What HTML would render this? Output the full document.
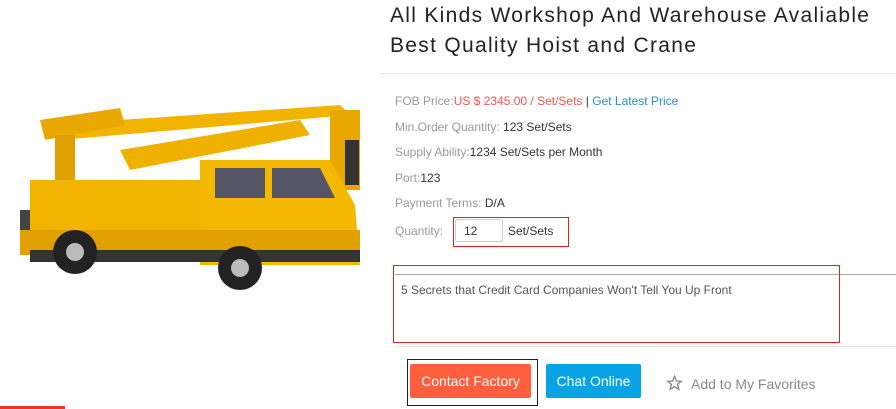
<!DOCTYPE html>
<html><head><style>
body{margin:0;width:896px;height:409px;background:#fff;font-family:"Liberation Sans",sans-serif;position:relative;overflow:hidden}
.a{position:absolute;white-space:nowrap}
.g{color:#999}.k{color:#333}
.r{font-size:12px}
</style></head><body>
<svg class="a" style="left:0;top:80px" width="370" height="220" viewBox="0 0 370 220">
<polygon points="45,45 340,25 350,35 60,60" fill="#f2b400"/>
<polygon points="40,40 120,28 125,45 45,60" fill="#e8a800"/>
<rect x="55" y="55" width="20" height="90" fill="#e0a000"/>
<polygon points="120,70 300,40 310,55 130,90" fill="#f0b000"/>
<rect x="330" y="30" width="30" height="80" fill="#e8a800"/>
<rect x="345" y="60" width="14" height="45" fill="#333"/>
<rect x="20" y="130" width="60" height="30" fill="#444"/>
<rect x="30" y="100" width="180" height="55" fill="#f2b400"/>
<polygon points="200,80 330,80 355,125 360,185 200,185" fill="#f5b800"/>
<polygon points="215,88 265,88 265,118 215,118" fill="#556"/>
<polygon points="272,88 320,88 335,118 272,118" fill="#556"/>
<rect x="20" y="150" width="340" height="25" fill="#e0a000"/>
<rect x="30" y="170" width="330" height="12" fill="#333"/>
<circle cx="75" cy="172" r="22" fill="#222"/><circle cx="75" cy="172" r="9" fill="#bbb"/>
<circle cx="240" cy="188" r="22" fill="#222"/><circle cx="240" cy="188" r="9" fill="#bbb"/>
</svg>
<div class="a" style="left:0;top:406px;width:65px;height:3px;background:#e33"></div>
<div class="a" style="left:390px;top:1px;font-size:21px;line-height:30px;color:#222;letter-spacing:1.3px">All Kinds Workshop And Warehouse Avaliable<br>Best Quality Hoist and Crane</div>
<div class="a" style="left:380px;top:73px;width:516px;height:1px;background:#e5e5e5"></div>
<div class="a r g" style="left:395px;top:94px">FOB Price:<span style="color:#f4554a">US $ 2345.00 / Set/Sets</span> <span class="k">|</span> <span style="color:#1e90d8">Get Latest Price</span></div>
<div class="a r g" style="left:395px;top:120px">Min.Order Quantity: <span class="k">123 Set/Sets</span></div>
<div class="a r g" style="left:395px;top:145px">Supply Ability:<span class="k">1234 Set/Sets per Month</span></div>
<div class="a r g" style="left:395px;top:171px">Port:<span class="k">123</span></div>
<div class="a r g" style="left:395px;top:196px">Payment Terms: <span class="k">D/A</span></div>
<div class="a r g" style="left:395px;top:224px">Quantity:</div>
<div class="a" style="left:453px;top:217px;width:114px;height:28px;border:1px solid #e02020"></div>
<div class="a r k" style="left:455px;top:219px;width:38px;height:21px;border:1px solid #ccc;border-radius:2px;padding-left:8px;line-height:22px">12</div>
<div class="a r k" style="left:508px;top:224px">Set/Sets</div>
<div class="a" style="left:395px;top:274px;width:501px;height:71px;border-top:1px solid #aaa;border-bottom:1px solid #e5e5e5"></div>
<div class="a" style="left:393px;top:265px;width:445px;height:76px;border:1px solid #e02020"></div>
<div class="a r" style="left:401px;top:283px;color:#555">5 Secrets that Credit Card Companies Won't Tell You Up Front</div>
<div class="a" style="left:407px;top:359px;width:129px;height:45px;border:1px solid #222"></div>
<div class="a" style="left:410px;top:364px;width:121px;height:34px;background:#ff5f3c;border-radius:2px;color:#fff;font-size:14px;line-height:34px;text-align:center">Contact Factory</div>
<div class="a" style="left:546px;top:364px;width:95px;height:34px;background:#07a3e5;border-radius:2px;color:#fff;font-size:14px;line-height:34px;text-align:center">Chat Online</div>
<svg class="a" style="left:666px;top:375px" width="17" height="16" viewBox="0 0 24 24"><polygon points="12,2 15,9 22,9.5 16.5,14 18.5,21.5 12,17.5 5.5,21.5 7.5,14 2,9.5 9,9" fill="none" stroke="#888" stroke-width="2"/></svg>
<div class="a" style="left:691px;top:376px;font-size:14px;color:#888">Add to My Favorites</div>
</body></html>
